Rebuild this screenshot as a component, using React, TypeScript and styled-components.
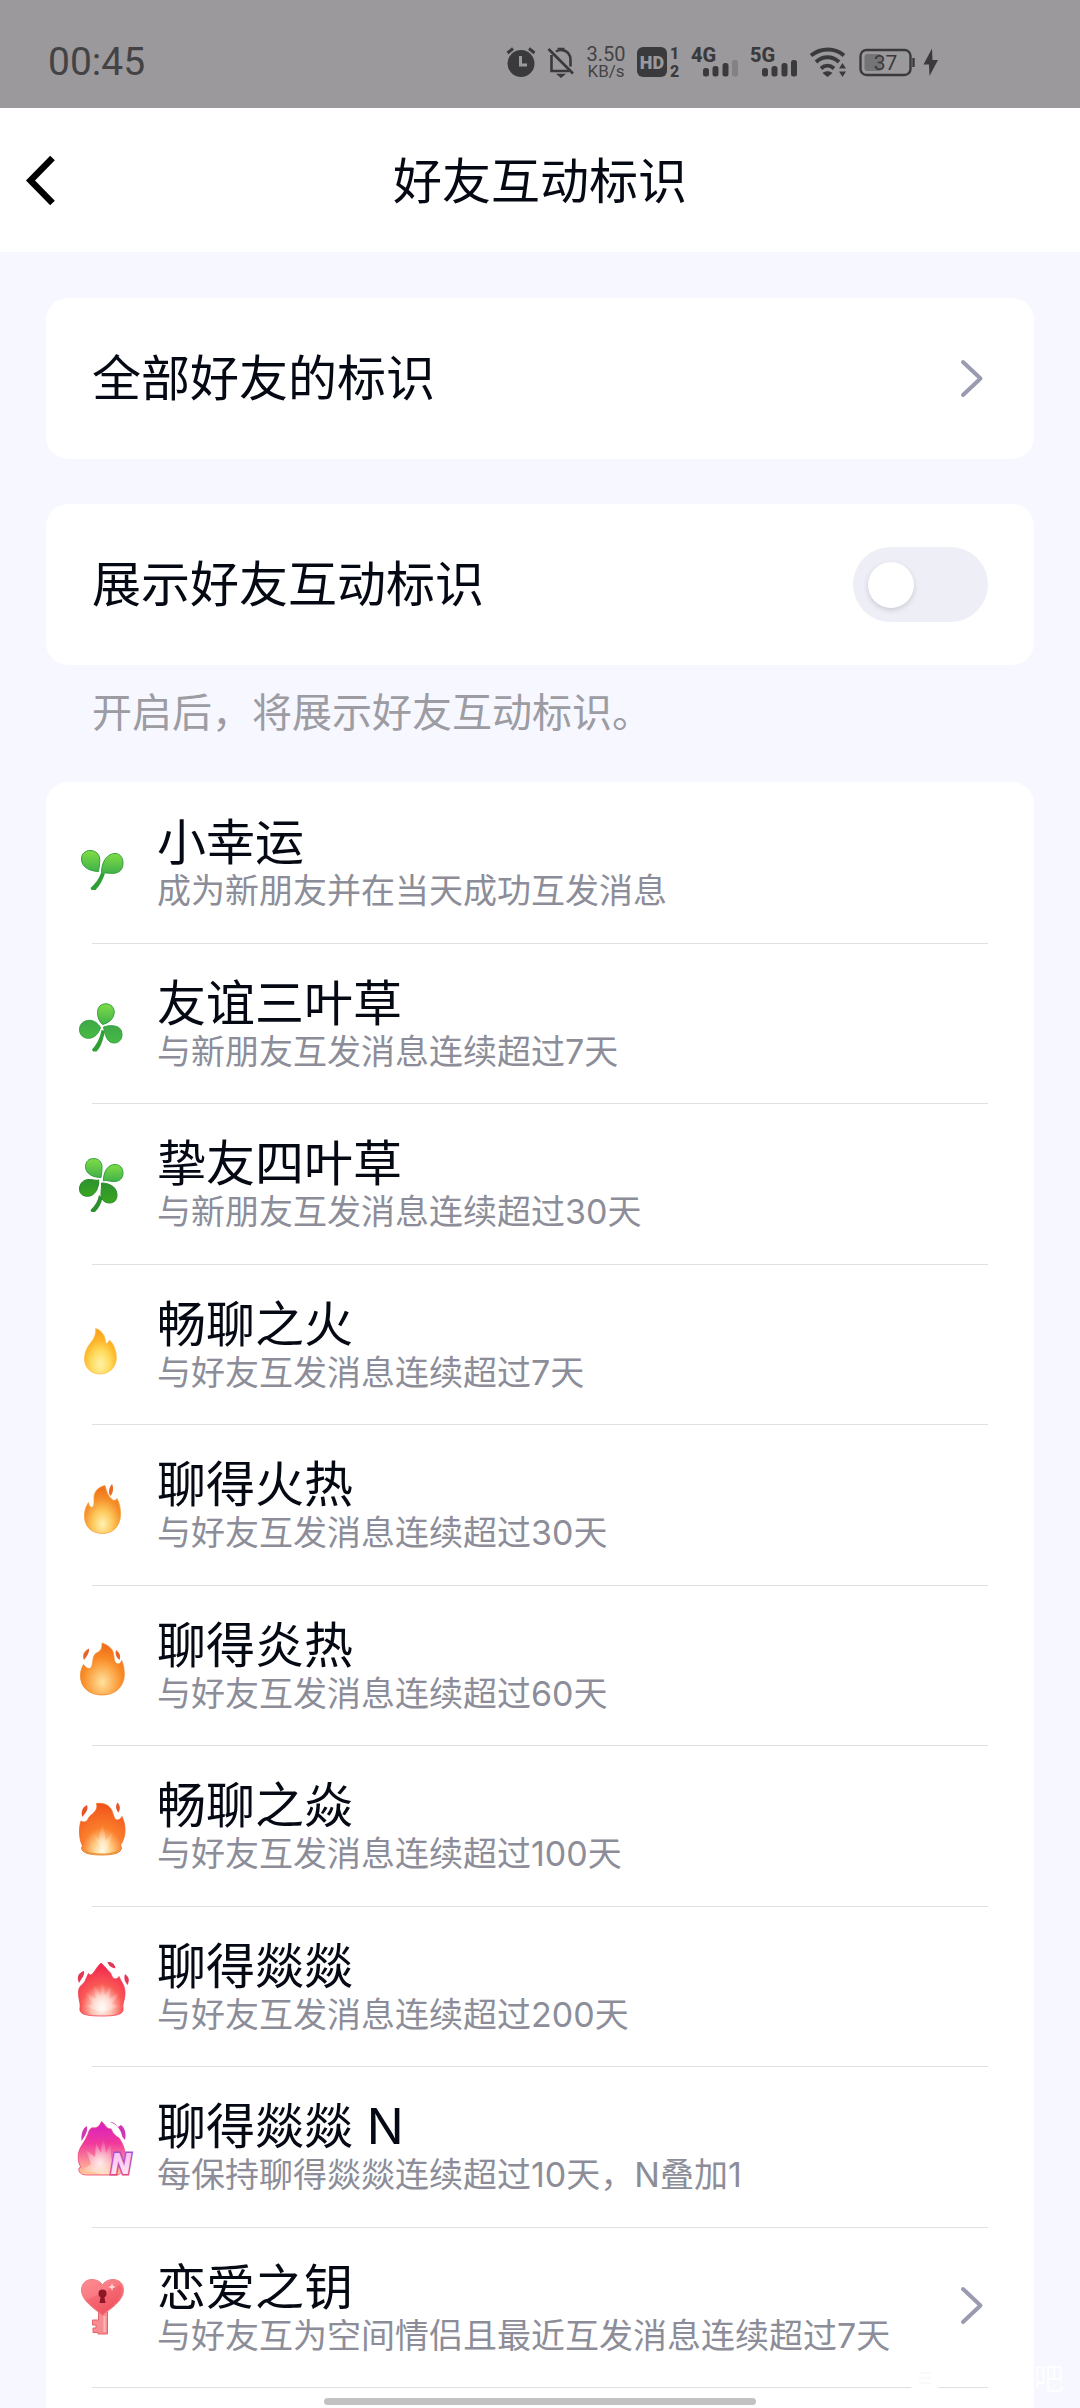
import React, { useState } from "react";
import styled, { createGlobalStyle } from "styled-components";

const GlobalStyle = createGlobalStyle`
  *, *::before, *::after { box-sizing: border-box; }
  html, body { margin: 0; padding: 0; }
  body {
    background: #f6f7ff;
    color: #050914;
    font-family: Inter, "Noto Sans CJK SC", sans-serif;
    font-size: 49px;
  }
  h1, h2, p, ul { margin: 0; padding: 0; font-weight: 400; }
`;

const Screen = styled.div`
  height: 100vh;
  overflow: hidden;
  display: flex;
  flex-direction: column;
`;

/* ---------- status bar ---------- */

const StatusBar = styled.div`
  flex: none;
  height: 108px;
  padding: 16px 142px 0 48px;
  display: flex;
  align-items: center;
  justify-content: space-between;
  background: #9b999b;
  color: #434345;
  font-family: Roboto, sans-serif;
`;

const Clock = styled.time`
  font-size: 39px;
  line-height: 44px;
`;

const StatusIcons = styled.div`
  display: flex;
  align-items: center;
  gap: 11px;
  svg { display: block; flex: none; overflow: visible; }
`;

const Speed = styled.div`
  width: 40px;
  display: flex;
  flex-direction: column;
  align-items: center;
  font-size: 20px;
  line-height: 18px;
  small { font-size: 17px; line-height: 16px; }
`;

/* ---------- header ---------- */

const Header = styled.header`
  flex: none;
  height: 144px;
  padding: 0 20px;
  display: grid;
  grid-template-columns: 80px 1fr 80px;
  align-items: center;
  background: #fff;
`;

const BackButton = styled.button`
  height: 80px;
  padding: 0;
  border: 0;
  background: none;
  display: flex;
  align-items: center;
  cursor: pointer;
`;

const PageTitle = styled.h1`
  padding-top: 4px;
  text-align: center;
  font-size: 49px;
  line-height: 56px;
`;

/* ---------- cards ---------- */

const Content = styled.main`
  flex: 1;
  min-height: 0;
  padding: 46px 46px 0;
  display: flex;
  flex-direction: column;
`;

const cardRow = `
  flex: none;
  height: 161px;
  padding: 0 46px;
  display: flex;
  align-items: center;
  justify-content: space-between;
  border-radius: 22px;
  background: #fff;
  color: inherit;
  font-size: 49px;
  line-height: 56px;
`;

const LinkCard = styled.a`
  ${cardRow}
  text-decoration: none;
  padding-right: 50px;
`;

const SwitchCard = styled.label`
  ${cardRow}
  margin-top: 45px;
  cursor: pointer;
`;

const Switch = styled.input`
  appearance: none;
  margin: 0;
  width: 135px;
  height: 75px;
  padding: 0 15px;
  border-radius: 38px;
  background: ${(p) => (p.checked ? "#0099ff" : "#eeeef6")};
  display: flex;
  align-items: center;
  justify-content: ${(p) => (p.checked ? "flex-end" : "flex-start")};
  cursor: pointer;
  &::before {
    content: "";
    width: 46px;
    height: 46px;
    border-radius: 50%;
    background: #fff;
    box-shadow: 0 2px 5px rgba(60, 60, 90, 0.2);
  }
`;

const Hint = styled.p`
  flex: none;
  padding: 24px 46px 45px;
  color: #9c9ca2;
  font-size: 40px;
  line-height: 48px;
`;

const BadgeList = styled.ul`
  flex: 1;
  min-height: 0;
  padding-top: 1px;
  overflow: hidden;
  list-style: none;
  border-radius: 22px 22px 0 0;
  background: #fff;
  display: grid;
  grid-auto-rows: 161px 160px;
`;

const BadgeRow = styled.li`
  padding: 0 46px 0 28px;
  display: grid;
  grid-template-columns: 60px 1fr auto;
  column-gap: 23px;
  align-items: start;
  background: linear-gradient(#dfdfe2, #dfdfe2) no-repeat 46px 100% / calc(100% - 92px) 1px;
`;

const BadgeIcon = styled.svg`
  width: 60px;
  height: 60px;
  margin-top: 50px;
  display: block;
`;

const BadgeText = styled.div`
  padding-top: 34px;
`;

const BadgeName = styled.h2`
  font-size: 49px;
  line-height: 52px;
`;

const BadgeRule = styled.p`
  color: #8c8d98;
  font-size: 34px;
  line-height: 44px;
  white-space: nowrap;
`;

const RowLink = styled.a`
  height: 156px;
  padding-right: 4px;
  display: flex;
  align-items: center;
`;

/* ---------- overlays ---------- */

const HomeIndicator = styled.div`
  position: fixed;
  left: 30%;
  right: 30%;
  bottom: 3px;
  height: 7px;
  border-radius: 4px;
  background: #c2c2c2;
`;

const Watermark = styled.div`
  position: fixed;
  right: 16px;
  bottom: 12px;
  display: flex;
  align-items: center;
  gap: 94px;
  color: rgba(255, 255, 255, 0.85);
  font-size: 30px;
  line-height: 36px;
`;

/* ---------- icons ---------- */

const PaintDefs = styled.svg`
  position: absolute;
  width: 0;
  height: 0;
`;

const Chevron = () => (
  <svg width="24" height="40" viewBox="0 0 24 40" fill="none" stroke="#9a9ab1" strokeWidth="4" strokeLinecap="round" strokeLinejoin="round" aria-hidden="true">
    <path d="M3 3L20.500 19.500L3 36" />
  </svg>
);

const BackIcon = () => (
  <svg width="40" height="56" viewBox="0 0 40 56" fill="none" stroke="#000" strokeWidth="6.500" aria-hidden="true">
    <path d="M32.500 6L10.500 28.500L32.500 51" />
  </svg>
);

const SignalIcon = ({ label, weak }: { label: string; weak?: boolean }) => (
  <svg width="48" height="32" viewBox="0 0 48 32" fill="#3a3a3c" aria-label={label}>
    <text x="0" y="15.500" fontFamily="Roboto" fontWeight="800" fontSize="20">{label}</text>
    <rect x="12" y="22" width="6" height="8.500" rx="2.500" />
    <rect x="21.500" y="20" width="6" height="10.500" rx="2.500" />
    <rect x="31.500" y="17" width="6" height="13.500" rx="2.500" />
    <rect x="41" y="14" width="6" height="16.500" rx="2.500" opacity={weak ? 0.25 : 1} />
  </svg>
);

const StatusGlyphs = () => (
  <StatusIcons>
    <svg width="30" height="32" viewBox="0 0 30 32" fill="#3a3a3c" aria-hidden="true">
      <circle cx="15" cy="17.500" r="13.500" />
      <path d="M1.500 7L7 2.500M28.500 7L23 2.500" stroke="#3a3a3c" strokeWidth="3" />
      <path d="M14.500 10V19H21" fill="none" stroke="#9b999b" strokeWidth="3" />
    </svg>
    <svg width="28" height="32" viewBox="0 0 28 32" fill="none" stroke="#3a3a3c" strokeWidth="2.600" aria-hidden="true">
      <path d="M1.500 3L26 27.500" />
      <path d="M4.500 9V25H22M9 5.500C11 4.200 13 4 14 4C20 4 23.500 8.500 23.500 14V20.500" />
      <path d="M10.500 2.500H17.500M11 28.500H17L14 31Z" strokeWidth="1.500" fill="#3a3a3c" />
    </svg>
    <Speed>
      <span>3.50</span>
      <small>KB/s</small>
    </Speed>
    <svg width="43" height="32" viewBox="0 0 43 32" fill="#3a3a3c" aria-label="HD 1 2">
      <rect x="0" y="1" width="30" height="30" rx="6" />
      <text x="15" y="22.500" textAnchor="middle" fill="#9b999b" fontFamily="Roboto" fontWeight="900" fontSize="18">HD</text>
      <text x="33" y="13" fontFamily="Roboto" fontWeight="800" fontSize="16">1</text>
      <text x="33" y="31" fontFamily="Roboto" fontWeight="800" fontSize="16">2</text>
    </svg>
    <SignalIcon label="4G" weak />
    <SignalIcon label="5G" />
    <svg width="38" height="32" viewBox="0 0 38 32" fill="none" stroke="#3a3a3c" strokeWidth="4" aria-hidden="true">
      <path d="M2 9.500C12 1.500 26 1.500 35 9.500M7 16C14 9.800 23 9.800 30 16M12 22.500C16 18.800 21 18.800 25 22.500" />
      <path d="M13.500 27C16.500 24.600 20.500 24.600 23.500 27L18.500 31Z" fill="#3a3a3c" stroke="none" />
      <path d="M30 22.500L33.500 17L37 22.500ZM30 25.500L33.500 31L37 25.500Z" fill="#3a3a3c" stroke="none" />
    </svg>
    <svg width="80" height="32" viewBox="0 0 80 32" aria-label="37%">
      <rect x="2.500" y="4" width="50" height="25" rx="6" fill="none" stroke="#3a3a3c" strokeWidth="2.400" />
      <path d="M55.500 12V21" stroke="#3a3a3c" strokeWidth="2.400" />
      <rect x="6.500" y="8" width="17" height="17" rx="3" fill="#747375" />
      <text x="27.500" y="24" textAnchor="middle" fill="#3a3a3c" fontFamily="Roboto" fontSize="21">37</text>
      <path d="M74 2.500L65.500 18.500H71L71.500 30L80 14H74.500Z" fill="#3a3a3c" />
    </svg>
  </StatusIcons>
);

const Gradients = () => (
  <PaintDefs aria-hidden="true">
    <defs>
      <linearGradient id="leafLight" x1="0" y1="0" x2="0" y2="1">
        <stop offset="0" stopColor="#7fdc45" /><stop offset="1" stopColor="#41b24a" />
      </linearGradient>
      <linearGradient id="leafDark" x1="0" y1="0" x2="0" y2="1">
        <stop offset="0" stopColor="#3fa747" /><stop offset="1" stopColor="#45bb45" />
      </linearGradient>
      <linearGradient id="leafDeep" x1="0" y1="0" x2="0" y2="1">
        <stop offset="0" stopColor="#2c9130" /><stop offset="1" stopColor="#3aa61f" />
      </linearGradient>
      <radialGradient id="fire1" cx="0.5" cy="0.78" r="0.75">
        <stop offset="0" stopColor="#fff3a8" /><stop offset="0.4" stopColor="#ffda5c" /><stop offset="0.7" stopColor="#fdb528" /><stop offset="1" stopColor="#f9a01c" />
      </radialGradient>
      <radialGradient id="fire2" cx="0.5" cy="0.8" r="0.8">
        <stop offset="0" stopColor="#fff2b4" /><stop offset="0.35" stopColor="#fdc75a" /><stop offset="0.65" stopColor="#f6902a" /><stop offset="1" stopColor="#ee6a1c" />
      </radialGradient>
      <radialGradient id="fire3" cx="0.5" cy="0.75" r="0.75">
        <stop offset="0" stopColor="#ffe2a0" /><stop offset="0.35" stopColor="#fdb055" /><stop offset="0.62" stopColor="#f98a24" /><stop offset="1" stopColor="#f0661a" />
      </radialGradient>
      <radialGradient id="fire4" cx="0.5" cy="0.92" r="0.88">
        <stop offset="0" stopColor="#fffbe6" /><stop offset="0.22" stopColor="#ffd08a" /><stop offset="0.5" stopColor="#fb7f2c" /><stop offset="1" stopColor="#f2551c" />
      </radialGradient>
      <radialGradient id="fire5" cx="0.5" cy="0.85" r="0.85">
        <stop offset="0" stopColor="#fff8f2" /><stop offset="0.25" stopColor="#ffc4b4" /><stop offset="0.52" stopColor="#fa5a55" /><stop offset="1" stopColor="#f01f4e" />
      </radialGradient>
      <linearGradient id="fire6" x1="0" y1="0" x2="0" y2="1">
        <stop offset="0" stopColor="#d61fc4" /><stop offset="0.4" stopColor="#f0389c" /><stop offset="0.75" stopColor="#fb8f98" /><stop offset="1" stopColor="#ffcf9a" />
      </linearGradient>
      <radialGradient id="glow" cx="0.5" cy="0.75" r="0.55">
        <stop offset="0" stopColor="#fff" stopOpacity="0.95" /><stop offset="1" stopColor="#fff" stopOpacity="0" />
      </radialGradient>
      <linearGradient id="nFill" x1="0" y1="0" x2="0" y2="1">
        <stop offset="0" stopColor="#fbb5f3" /><stop offset="1" stopColor="#fff0f2" />
      </linearGradient>
      <linearGradient id="nEdge" x1="0" y1="0" x2="0" y2="1">
        <stop offset="0" stopColor="#9a4fe0" /><stop offset="1" stopColor="#ec4a72" />
      </linearGradient>
      <linearGradient id="heart" x1="0" y1="0" x2="0.6" y2="1">
        <stop offset="0" stopColor="#fb8d93" /><stop offset="0.45" stopColor="#fa7a82" /><stop offset="1" stopColor="#f0525f" />
      </linearGradient>
    </defs>
  </PaintDefs>
);

const icons: Record<string, React.ReactNode> = {
  sprout: (
    <>
      <path d="M27 40L31 40.500C28.500 47.500 25.500 53 21.500 57H17.500L16.500 55C21 51 25 46 27 40Z" fill="#2f9e36" />
      <g fill="url(#leafLight)" stroke="#35a03e" strokeWidth="1">
        <path d="M24.500 38.500C15 38 7.500 34 7.500 26C7.500 20.500 11.500 17.500 16 17.500C22 17.500 25.800 21.500 25.800 27C25.800 31 25 35 24.500 38.500Z" />
        <path d="M27.500 40.500C27.500 36 28 31 31 26.500C34 22 38 20.500 41 20.500C46 20.500 49 24.500 49 30C49 37 45 39.800 40 40.300C35 40.800 31 39 27.500 40.500Z" />
      </g>
    </>
  ),
  clover3: (
    <>
      <path d="M27.500 36L31 37C29 46 27 53 22.500 57.500H19L18 55.500C23 50 26 44 27.500 36Z" fill="#2f9e36" />
      <g stroke="#35a03e" strokeWidth="1">
        <path d="M28.500 30.500C25 27.500 23.500 23 23.500 18.500C23.500 13 27 9.800 32 9.800C37 9.800 40.200 13.500 40.200 18C40.200 24.500 35 29 28.500 30.500Z" fill="url(#leafLight)" />
        <path d="M26.500 33.500C25 39 20.500 44.300 14.500 44.300C9 44.300 5.500 40.500 5.500 35.500C5.500 30 10 26.300 15.500 26.300C20 26.300 24 29.500 26.500 33.500Z" fill="url(#leafDark)" />
        <path d="M29.500 33C33 31.500 48 29 48 40.500C48 46 44.500 49 40 49C33 49 31 41 29.500 33Z" fill="url(#leafDark)" />
      </g>
    </>
  ),
  clover4: (
    <>
      <path d="M25 41L28.500 44C27 50 25 54 21 58H17.500L16.500 56C21 52 24 47 25 41Z" fill="#2f8f2e" />
      <g strokeWidth="1">
        <path d="M27 23.500C20 23.500 11.500 20.500 11.500 12.500C11.500 7.500 15 4.500 19.500 4.500C24.500 4.500 28 8 28 13C28 17 27.500 20.500 27 23.500Z" fill="url(#leafLight)" stroke="#35a03e" />
        <path d="M29.300 26.800C29.500 18 33.500 10.500 41 10.500C46 10.500 49 14 49 19C49 24.500 45.500 27.500 40 27.500C36 27.500 32 26 29.300 26.800Z" fill="url(#leafLight)" stroke="#35a03e" />
        <path d="M24.800 26C25 34 21 42.300 13.500 42.300C8.500 42.300 5.500 39.500 5.500 35C5.500 29 10 25.500 15 25.500C19 25.500 22 26.800 24.800 26Z" fill="url(#leafDeep)" stroke="#2a8a2d" />
        <path d="M27.500 29C34 29 43 32 43 41C43 46 40 49 35.500 49C30.500 49 27 45.500 27 40.500C27 36 27.800 32.500 27.500 29Z" fill="url(#leafDeep)" stroke="#2a8a2d" />
      </g>
    </>
  ),
  fire1: (
    <path d="M21.500 13.500C22.500 20 19 25 15 30C12 34 10.500 39 10.500 44C10.500 53 17.500 59 26 59C35.500 59 42.300 52 42.300 43C42.300 36 40 29 35.500 25C35 27 34 28 31.500 28.500C32 22 28 15 21.500 13.500Z" fill="url(#fire1)" stroke="#fbc04c" strokeWidth="0.800" />
  ),
  fire2: (
    <>
      <path d="M31 10.500C24 12 19.500 17 20 24C20 27 20.500 29 19 32C16.500 33 15 31 14.500 27.500C11.500 32 10.500 36 10.500 41C10.500 52 18 58.500 28.500 58.500C39 58.500 46.500 51 46.500 39C46.500 33 45.500 28 43 23.500C42 25.500 39.500 26 37.500 24C34 21 32.500 16 31 10.500Z" fill="url(#fire2)" stroke="#f6a03a" strokeWidth="0.800" />
      <path d="M38 9C40 13 39 18 36.500 21C34 18 34.500 13 38 9Z" fill="#e86a24" />
    </>
  ),
  fire3: (
    <>
      <path d="M28 7C28.500 13 26 15.500 22.500 17C17.500 20 20 27 17 32C14 33.500 11.500 31.500 9.500 28.500C7 33 6.500 36 6.500 40C6.500 52 16 59 28 59C41 59 50.300 51 50.300 38C50.300 33 49.500 29 47.700 24.500C46.500 28 43.500 29 41.500 26.500C39 23 41 18 37.500 13C35 10 31 8 28 7Z" fill="url(#fire3)" stroke="#f08a2c" strokeWidth="0.800" />
      <path d="M15 12.500C15.500 17 13 20 10 24C8 19 10 15 15 12.500ZM42 14C46 17 47 20 45.500 24C42 21 41 18 42 14Z" fill="#e8622a" />
    </>
  ),
  fire4: (
    <>
      <path d="M22.500 7.500C31 6.500 36 10 38 15C39.500 19 40 22 42 24C45 24.500 47 22.500 48 20.500C50 25 51 29 51 34C51 41 49 45 46.500 49L47.500 52C47 57 40 59 28 59C15 59 8 57 7.500 52L8.500 50C6 45 5.500 40 5.500 35C5.500 31 6 28 7 25C10 27 13 26 14.500 22C17 18 25 15 22.500 7.500Z" fill="url(#fire4)" stroke="#ef6a24" strokeWidth="0.800" />
      <path d="M8 52C12 56 20 57.500 28 57.500C36 57.500 43 56 47 52C46 56.500 40 59 28 59C15 59 9 57 8 52Z" fill="#e89a3c" />
      <path d="M28 54L18 37L25 44L28 22L32 44L40 34L33 54Z" fill="url(#glow)" opacity="0.500" />
      <path d="M13 9C15 14 11 17 8.500 21C6.500 16 8.500 11 13 9ZM43.500 6.500C46.500 10 46.500 13 44.500 16.500C41.500 13 41.500 10 43.500 6.500Z" fill="#e8532a" />
    </>
  ),
  fire5: (
    <>
      <path d="M27 6C31 9 33 13 36.500 16C38 19 38.500 22 42 22C43.500 21.500 44.500 20.500 45 19.500C47 25 51 28 51 36C51 43 48 47 49 51C50 57 44 59 28 59C11 59 5 57 6 51C7 47 4.500 43 4.500 36C4.500 31 6 29 10 26C12 23 13 19 14.500 16.500C16 19 18 18 20 15C22 12 24 9 27 6Z" fill="url(#fire5)" stroke="#f03a50" strokeWidth="0.800" />
      <path d="M28 56L12 49L19 47L10 34L22 42L19 27L27 38L28 18L31 38L38 27L35 42L47 34L38 47L45 49Z" fill="url(#glow)" opacity="0.600" />
      <path d="M10 14C11 18 8 21 5 26C2.500 20 4 16 10 14ZM33.500 5C38 4.500 41 7 41.500 11.500C37.500 10.500 34.500 9 33.500 5ZM51 17C55 20 56 23 53.500 28C50.500 24.500 49.500 21 51 17Z" fill="#e03a55" />
    </>
  ),
  fireN: (
    <>
      <path d="M27.500 4.500C31 7 32 12 37 12C39 17 42 19 45 21C49 27 51 32 51 39C51 47 48 57 44 58H13C7 58 4 55 5 51L7 50C4 46 4 42 4.500 36C6 29 11 25 14 17C15 13 17 10 20 11C24 11 26 8 27.500 4.500Z" fill="url(#fire6)" stroke="#ee3f74" strokeWidth="0.800" />
      <path d="M28 57L8 53L17 47L12 33L21 40L22 26L27 36L29 14L32 36L37 26L37 42L44 36L40 57Z" fill="url(#glow)" opacity="0.850" />
      <path d="M13 9C9 11 7 16 7.500 24C11 19 14 14 13 9ZM36 5C42 7 47 12 48.500 20L51 23C52.500 17 51 11 47 8L44 10C41 6 39 5 36 5Z" fill="#cf35b4" />
      <text x="47" y="57" textAnchor="middle" fontFamily="Roboto" fontWeight="900" fontStyle="italic" fontSize="29" fill="url(#nFill)" stroke="url(#nEdge)" strokeWidth="3" paintOrder="stroke">N</text>
    </>
  ),
  key: (
    <>
      <path d="M24.500 34H33.500V56H24V54.500H19V50H22V47H18.500V42H24.500Z" fill="#f78d90" stroke="#e2646c" strokeWidth="1" strokeLinejoin="round" />
      <path d="M30.500 38V54" stroke="#fbb9ba" strokeWidth="2" />
      <path d="M28.500 37.500C20 30 7.500 23 7.500 12C7.500 5.500 12 1.500 18 1.500C23 1.500 27 4 28.500 7C30 4 34 1.500 39 1.500C45 1.500 49.500 5.500 49.500 12C49.500 23 37 30 28.500 37.500Z" fill="url(#heart)" stroke="#ee8085" strokeWidth="1" />
      <path d="M12 22L46 7C49 14 45 21 38 27L28.500 35C22 30 16 27 12 22Z" fill="#ee4f5d" opacity="0.350" />
      <circle cx="28.500" cy="15.500" r="4" fill="#8c1826" />
      <path d="M27 17H30L31.500 25H25.500Z" fill="#8c1826" />
      <path d="M38 5L39 8L42 9L39 10L38 13L37 10L34 9L37 8Z" fill="#ffd9d9" />
    </>
  ),
};

const badges = [
  { icon: "sprout", name: "小幸运", rule: "成为新朋友并在当天成功互发消息" },
  { icon: "clover3", name: "友谊三叶草", rule: "与新朋友互发消息连续超过7天" },
  { icon: "clover4", name: "挚友四叶草", rule: "与新朋友互发消息连续超过30天" },
  { icon: "fire1", name: "畅聊之火", rule: "与好友互发消息连续超过7天" },
  { icon: "fire2", name: "聊得火热", rule: "与好友互发消息连续超过30天" },
  { icon: "fire3", name: "聊得炎热", rule: "与好友互发消息连续超过60天" },
  { icon: "fire4", name: "畅聊之焱", rule: "与好友互发消息连续超过100天" },
  { icon: "fire5", name: "聊得燚燚", rule: "与好友互发消息连续超过200天" },
  { icon: "fireN", name: "聊得燚燚 N", rule: "每保持聊得燚燚连续超过10天，N叠加1" },
  { icon: "key", name: "恋爱之钥", rule: "与好友互为空间情侣且最近互发消息连续超过7天", link: true },
];

export default function App() {
  const [shown, setShown] = useState(false);
  return (
    <>
      <GlobalStyle />
      <Gradients />
      <Screen lang="zh-CN">
        <StatusBar>
          <Clock>00:45</Clock>
          <StatusGlyphs />
        </StatusBar>
        <Header>
          <BackButton type="button" aria-label="返回">
            <BackIcon />
          </BackButton>
          <PageTitle>好友互动标识</PageTitle>
        </Header>
        <Content>
          <LinkCard href="#all">
            全部好友的标识
            <Chevron />
          </LinkCard>
          <SwitchCard htmlFor="show-badges">
            展示好友互动标识
            <Switch
              id="show-badges"
              type="checkbox"
              role="switch"
              checked={shown}
              onChange={(e) => setShown(e.target.checked)}
            />
          </SwitchCard>
          <Hint>开启后，将展示好友互动标识。</Hint>
          <BadgeList>
            {badges.map((b) => (
              <BadgeRow key={b.name}>
                <BadgeIcon viewBox="0 0 60 60" aria-hidden="true">{icons[b.icon]}</BadgeIcon>
                <BadgeText>
                  <BadgeName>{b.name}</BadgeName>
                  <BadgeRule>{b.rule}</BadgeRule>
                </BadgeText>
                {b.link && (
                  <RowLink href="#key" aria-label={b.name}>
                    <Chevron />
                  </RowLink>
                )}
              </BadgeRow>
            ))}
          </BadgeList>
        </Content>
      </Screen>
      <Watermark aria-hidden="true">
        <svg width="30" height="30" viewBox="0 0 30 30">
          <rect x="1" y="1" width="28" height="28" rx="7" fill="#fff" />
          <path d="M9 10H21M9 15H21M9 20H21" stroke="#fafafa" strokeWidth="2" />
        </svg>
        <span>吧</span>
      </Watermark>
      <HomeIndicator />
    </>
  );
}
